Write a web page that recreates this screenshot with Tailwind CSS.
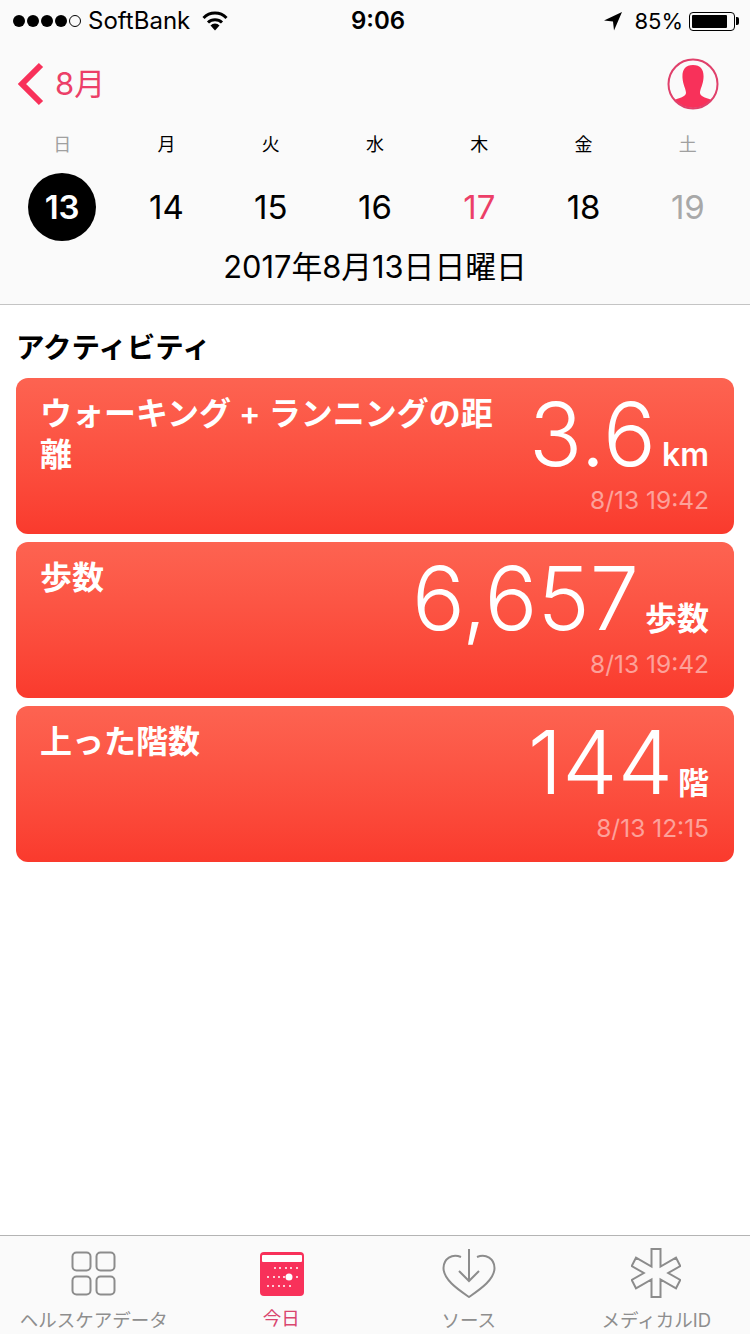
<!DOCTYPE html>
<html lang="ja">
<head>
  <meta charset="UTF-8" />
  <meta name="viewport" content="width=device-width, initial-scale=1.0"/>
  <title>ヘルスケア</title>
  <script src="https://cdn.jsdelivr.net/npm/@tailwindcss/browser@4"></script>
</head>
<body class="w-[750px] h-[1334px] overflow-hidden bg-white font-['Inter','Noto_Sans_CJK_JP',sans-serif] text-black flex flex-col">

  <!-- header -->
  <header class="h-[305px] shrink-0 bg-[#fafafa] border-b border-[#c4c4c4]">
    <!-- status bar -->
    <div class="h-[40px] pt-[2px] pl-[13px] pr-[11px] relative flex items-center justify-between text-[24px] leading-[38px]">
      <div class="flex items-center">
        <div class="flex gap-[2px]">
          <span class="w-[12px] h-[12px] rounded-full bg-black"></span>
          <span class="w-[12px] h-[12px] rounded-full bg-black"></span>
          <span class="w-[12px] h-[12px] rounded-full bg-black"></span>
          <span class="w-[12px] h-[12px] rounded-full bg-black"></span>
          <span class="w-[12px] h-[12px] rounded-full border border-black"></span>
        </div>
        <span class="ml-[7px]">SoftBank</span>
        <svg class="ml-[12px]" width="26" height="20" viewBox="0 0 26 20">
          <path d="M1.5 7 A16 16 0 0 1 24.500 7" fill="none" stroke="#000" stroke-width="3"/>
          <path d="M6 11.500 A10 10 0 0 1 20 11.500" fill="none" stroke="#000" stroke-width="3"/>
          <path d="M8.500 14.500 A6 6 0 0 1 17.500 14.500 L13 19.500 Z" fill="#000"/>
        </svg>
      </div>
      <span class="absolute left-[351px] top-[2px] font-semibold">9:06</span>
      <div class="flex items-center">
        <svg width="20" height="20" viewBox="0 0 20 20"><path d="M19 1 L1 9.500 L10 10.500 L11 19.500 Z" fill="#000"/></svg>
        <span class="ml-[11px] text-[22px]">85%</span>
        <div class="ml-[6px] w-[46px] h-[19px] border border-black rounded-[4px] p-[2px]">
          <div class="w-[35px] h-full bg-black rounded-[1px]"></div>
        </div>
        <span class="w-[3px] h-[8px] bg-black rounded-r-[2px] ml-[1px]"></span>
      </div>
    </div>

    <!-- nav -->
    <div class="h-[93px] pb-[5px] pl-[17px] pr-[31px] flex items-center justify-between">
      <div class="flex items-center">
        <svg width="27" height="44" viewBox="0 0 27 44"><path d="M24 3 L5 22 L24 41" fill="none" stroke="#f8315a" stroke-width="6"/></svg>
        <span class="ml-[11px] text-[31px] text-[#ec3f68] leading-[40px]">8月</span>
      </div>
      <svg width="52" height="52" viewBox="0 0 52 52">
        <defs><clipPath id="avatar"><circle cx="26" cy="26" r="24"/></clipPath></defs>
        <g clip-path="url(#avatar)">
          <path d="M26 7 C34 7 37 12 36.500 20 C36 27 33 31 33 35 C33 39 41 40 47 43 L47 52 L5 52 L5 43 C11 40 19 39 19 35 C19 31 16 27 15.500 20 C15 12 18 7 26 7 Z" fill="#f8315a"/>
        </g>
        <circle cx="26" cy="26" r="24.500" fill="none" stroke="#e0406b" stroke-width="2"/>
      </svg>
    </div>

    <!-- week -->
    <div class="grid grid-cols-7 px-[10px] text-center">
      <span class="text-[18px] leading-[24px] text-[#a0a0a0]">日</span>
      <span class="text-[18px] leading-[24px]">月</span>
      <span class="text-[18px] leading-[24px]">火</span>
      <span class="text-[18px] leading-[24px]">水</span>
      <span class="text-[18px] leading-[24px]">木</span>
      <span class="text-[18px] leading-[24px]">金</span>
      <span class="text-[18px] leading-[24px] text-[#a0a0a0]">土</span>
    </div>
    <div class="grid grid-cols-7 px-[10px] mt-[16px] text-center text-[33px] leading-[68px] h-[68px]">
      <span class="w-[68px] h-[68px] mx-auto rounded-full bg-black text-white font-semibold">13</span>
      <span>14</span>
      <span>15</span>
      <span>16</span>
      <span class="text-[#ec3f68]">17</span>
      <span>18</span>
      <span class="text-[#a8a8a8]">19</span>
    </div>
    <div class="mt-[6px] text-center text-[30.800px] leading-[40px]">2017年8月13日日曜日</div>
  </header>

  <!-- activity -->
  <main class="flex-1 px-[16px]">
    <h2 class="pt-[25px] text-[28.500px] leading-[36px] font-semibold">アクティビティ</h2>
    <div class="mt-[12px] flex flex-col gap-[8px] text-white">

      <section class="h-[156px] rounded-[12px] bg-gradient-to-b from-[#fd6351] to-[#fa3a2d] pl-[24px] pr-[25px] flex justify-between">
        <h3 class="w-[462px] shrink-0 pt-[15px] text-[32px] leading-[41px] font-semibold">ウォーキング + ランニングの距離</h3>
        <div class="flex flex-col items-end">
          <div class="h-[107px] flex items-baseline">
            <span class="text-[88px] leading-[112px] font-light">3.6</span>
            <span class="ml-[6px] text-[32px] font-semibold">km</span>
          </div>
          <span class="text-[24.500px] leading-[30px] text-white/50">8/13 19:42</span>
        </div>
      </section>

      <section class="h-[156px] rounded-[12px] bg-gradient-to-b from-[#fd6351] to-[#fa3a2d] pl-[24px] pr-[25px] flex justify-between">
        <h3 class="pt-[15px] text-[32px] leading-[41px] font-semibold">歩数</h3>
        <div class="flex flex-col items-end">
          <div class="h-[107px] flex items-baseline">
            <span class="text-[88px] leading-[112px] font-light">6,657</span>
            <span class="ml-[6px] text-[32px] font-semibold">歩数</span>
          </div>
          <span class="text-[24.500px] leading-[30px] text-white/50">8/13 19:42</span>
        </div>
      </section>

      <section class="h-[156px] rounded-[12px] bg-gradient-to-b from-[#fd6351] to-[#fa3a2d] pl-[24px] pr-[25px] flex justify-between">
        <h3 class="pt-[15px] text-[32px] leading-[41px] font-semibold">上った階数</h3>
        <div class="flex flex-col items-end">
          <div class="h-[107px] flex items-baseline">
            <span class="text-[88px] leading-[112px] font-light">144</span>
            <span class="ml-[5px] text-[31px] font-semibold">階</span>
          </div>
          <span class="text-[24.500px] leading-[30px] text-white/50">8/13 12:15</span>
        </div>
      </section>
    </div>
  </main>

  <!-- tab bar -->
  <nav class="h-[99px] shrink-0 bg-[#fafafa] border-t border-[#b4b4b4] grid grid-cols-4 text-center text-[18.500px] text-[#8e8e8e]">
    <div class="flex flex-col items-center">
      <svg class="mt-[15px]" width="46" height="46" viewBox="0 0 46 46" fill="none" stroke="#8c8c8c" stroke-width="2">
        <rect x="1.500" y="1.500" width="18" height="18" rx="4"/>
        <rect x="25.500" y="1.500" width="18" height="18" rx="4"/>
        <rect x="1.500" y="25.500" width="18" height="18" rx="4"/>
        <rect x="25.500" y="25.500" width="18" height="18" rx="4"/>
      </svg>
      <span class="mt-[10px] leading-[26px]">ヘルスケアデータ</span>
    </div>
    <div class="flex flex-col items-center text-[#d9466f]">
      <svg class="mt-[16px] ml-[1px]" width="44" height="44" viewBox="0 0 44 44">
        <rect width="44" height="44" rx="4" fill="#f8315a"/>
        <rect x="2" y="3" width="40" height="7" rx="1" fill="#fff"/>
        <g fill="#fff">
          <circle cx="15" cy="16" r="1"/><circle cx="20" cy="16" r="1"/><circle cx="26" cy="16" r="1"/><circle cx="31" cy="16" r="1"/><circle cx="37" cy="16" r="1"/>
          <circle cx="8" cy="25" r="1"/><circle cx="14" cy="25" r="1"/><circle cx="19" cy="25" r="1"/><circle cx="24" cy="25" r="1"/><circle cx="29" cy="25" r="3.500"/><circle cx="37" cy="25" r="1"/>
          <circle cx="8" cy="34" r="1"/><circle cx="13" cy="34" r="1"/><circle cx="19" cy="34" r="1"/><circle cx="24" cy="34" r="1"/><circle cx="30" cy="34" r="1"/>
        </g>
      </svg>
      <span class="mt-[9px] leading-[26px]">今日</span>
    </div>
    <div class="flex flex-col items-center">
      <svg class="mt-[12px]" width="54" height="50" viewBox="0 0 54 50" fill="none" stroke="#8c8c8c" stroke-width="2">
        <path d="M19 9 C10 5 1.500 11 1.500 20 C1.500 32 17 42 27 49 C37 42 52.500 32 52.500 20 C52.500 11 44 5 35 9"/>
        <path d="M27 1 V33 M17 23 L27 33 L37 23"/>
      </svg>
      <span class="mt-[9px] leading-[26px]">ソース</span>
    </div>
    <div class="flex flex-col items-center">
      <svg class="mt-[12px]" width="50" height="50" viewBox="0 0 50 50" fill="none" stroke="#8c8c8c" stroke-width="2">
        <path d="M20.500 1 H29.500 V18.600 L45 9.700 L49.300 18 L37.200 25 L49.300 32 L45 40.300 L29.500 31.400 V49 H20.500 V31.400 L5 40.300 L0.700 32 L12.800 25 L0.700 18 L5 9.700 L20.500 18.600 Z"/>
      </svg>
      <span class="mt-[9px] leading-[26px]">メディカルID</span>
    </div>
  </nav>

</body>
</html>
